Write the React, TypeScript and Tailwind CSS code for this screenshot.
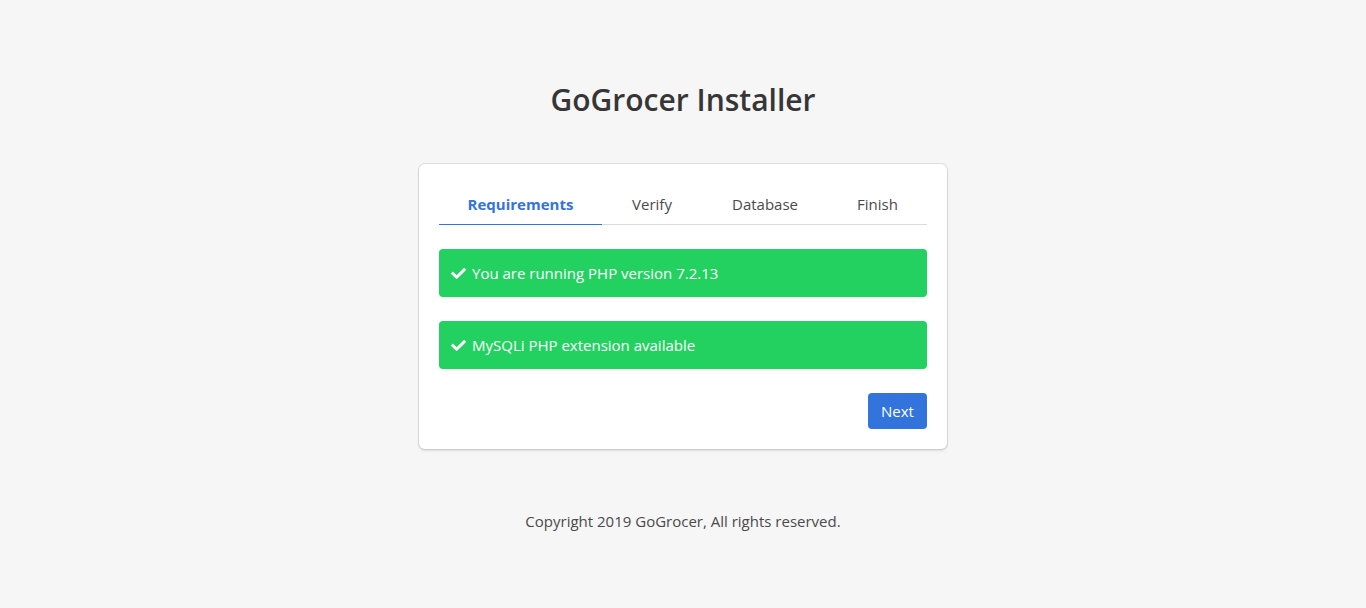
import React from "react";
import { FaCheck } from "react-icons/fa";

const tabs = [
  { label: "Requirements", w: "w-[163px]", active: true },
  { label: "Verify", w: "w-[100px]", active: false },
  { label: "Database", w: "w-[126px]", active: false },
  { label: "Finish", w: "w-[99px]", active: false },
];

export default function App() {
  return (
    <div
      className="min-h-[608px] bg-[#f6f6f6] flex flex-col items-center pt-[82px] text-[#4a4a4a]"
      style={{ fontFamily: '"Open Sans", "Noto Sans", sans-serif' }}
    >
      <h1 className="text-[30px] leading-[36px] font-semibold text-[#363636]">GoGrocer Installer</h1>
      <div className="mt-[46px] w-[528px] bg-white rounded-[6px] p-5 shadow-[0_2px_3px_rgba(10,10,10,0.1),0_0_0_1px_rgba(10,10,10,0.1)]">
        <div className="flex border-b border-[#dbdbdb]">
          {tabs.map((t) => (
            <div
              key={t.label}
              className={`${t.w} text-center py-2 text-[15px] leading-6 -mb-px border-b ${
                t.active ? "border-[#3273dc] text-[#3273dc] font-bold" : "border-transparent text-[#4a4a4a]"
              }`}
            >
              {t.label}
            </div>
          ))}
        </div>
        <div className="mt-6 flex flex-col gap-6">
          <div className="bg-[#23d160] text-white rounded-[4px] px-3 py-3 text-[15px] leading-6 flex items-center gap-[6px]">
            <FaCheck className="w-[15px] h-[15px]" />
            <span>You are running PHP version 7.2.13</span>
          </div>
          <div className="bg-[#23d160] text-white rounded-[4px] px-3 py-3 text-[15px] leading-6 flex items-center gap-[6px]">
            <FaCheck className="w-[15px] h-[15px]" />
            <span>MySQLi PHP extension available</span>
          </div>
        </div>
        <div className="mt-6 flex justify-end">
          <button className="h-9 w-[59px] bg-[#3273dc] text-white rounded-[4px] text-[15px]">Next</button>
        </div>
      </div>
      <p className="mt-[60px] text-[15px] leading-6 text-[#4a4a4a]">Copyright 2019 GoGrocer, All rights reserved.</p>
    </div>
  );
}
